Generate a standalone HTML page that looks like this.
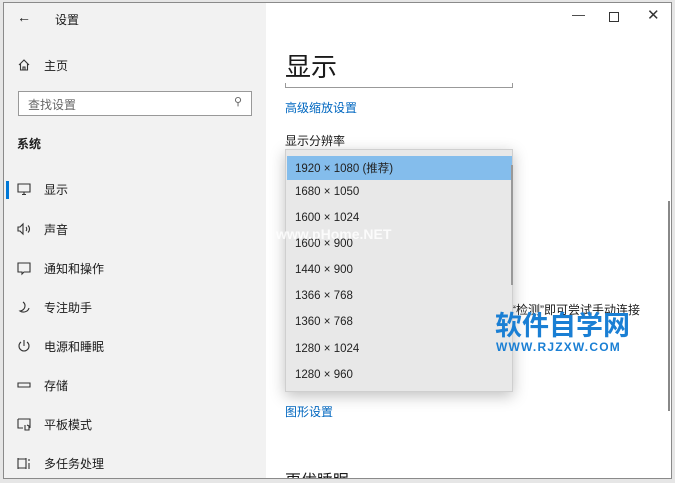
<!DOCTYPE html>
<html><head><meta charset="utf-8"><style>
*{margin:0;padding:0;box-sizing:border-box}
body{width:675px;height:483px;background:#e6e6e6;position:relative;overflow:hidden;font-family:"Liberation Sans","Noto Sans CJK SC",sans-serif;color:#1a1a1a}
.win{position:absolute;left:3px;top:2px;width:669px;height:477px;border:1px solid #8a8a8a;background:#fff;overflow:hidden}
.left{position:absolute;left:0;top:0;width:262px;height:100%;background:#f2f2f2}
.t{position:absolute;white-space:nowrap}
.nav{position:absolute;left:12px;font-size:12px;width:200px;height:18px;white-space:nowrap}
.nav span{position:absolute;left:26px;top:0;white-space:nowrap}
.ic{position:absolute;left:0;top:0;width:16px;height:16px}
.dd{position:absolute;left:281px;top:146px;width:228px;height:243px;background:#e8e8e8;border:1px solid #cfcfcf;box-shadow:0 4px 14px rgba(0,0,0,.25)}
.row{position:absolute;left:9px;font-size:11.5px;color:#222;white-space:nowrap}
</style></head><body>
<div class="win">
<div class="left">
 <div class="t" style="left:13px;top:6px;font-size:14px">←</div>
 <div class="t" style="left:51px;top:8px;font-size:12px">设置</div>
 <div class="nav" style="top:54px"><svg class="ic" viewBox="0 0 16 16" fill="none" stroke="#333" stroke-width="1.1"><path d="M3 8 8 3l5 5M4.5 7v6h7V7M7 13v-3h2v3"/></svg><span style="left:28px">主页</span></div>
 <div style="position:absolute;left:14px;top:88px;width:234px;height:25px;border:1px solid #999;background:#fff"></div>
 <div class="t" style="left:24px;top:93px;font-size:12px;color:#666">查找设置</div>
 <div class="t" style="left:230px;top:92px;font-size:11px;color:#666">⚲</div>
 <div class="t" style="left:13px;top:132px;font-size:12px;font-weight:bold">系统</div>
 <div style="position:absolute;left:2px;top:178px;width:3px;height:18px;background:#0078d7"></div>
 <div class="nav" style="top:178px"><svg class="ic" viewBox="0 0 16 16" fill="none" stroke="#333" stroke-width="1.1"><path d="M2 3h12v8H2zM6 13.5h4M8 11v2"/></svg><span style="left:28px">显示</span></div>
 <div class="nav" style="top:218px"><svg class="ic" viewBox="0 0 16 16" fill="none" stroke="#333" stroke-width="1.1"><path d="M2 6h2l3-3v10l-3-3H2zM10 6c1 1 1 3 0 4M12 4.5c2 2 2 5 0 7"/></svg><span style="left:28px">声音</span></div>
 <div class="nav" style="top:257px"><svg class="ic" viewBox="0 0 16 16" fill="none" stroke="#333" stroke-width="1.1"><path d="M2 3h12v9H8l-2 2v-2H2z"/></svg><span style="left:28px">通知和操作</span></div>
 <div class="nav" style="top:296px"><svg class="ic" viewBox="0 0 16 16" fill="none" stroke="#333" stroke-width="1.1"><path d="M7 3c3 2 3 8-3 9 3 2 8 1 9-3"/></svg><span style="left:28px">专注助手</span></div>
 <div class="nav" style="top:335px"><svg class="ic" viewBox="0 0 16 16" fill="none" stroke="#333" stroke-width="1.1"><path d="M8 2v6M5 4a5 5 0 1 0 6 0"/></svg><span style="left:28px">电源和睡眠</span></div>
 <div class="nav" style="top:374px"><svg class="ic" viewBox="0 0 16 16" fill="none" stroke="#333" stroke-width="1.1"><path d="M2 6h12v4H2z"/></svg><span style="left:28px">存储</span></div>
 <div class="nav" style="top:413px"><svg class="ic" viewBox="0 0 16 16" fill="none" stroke="#333" stroke-width="1.1"><path d="M2 3h12v9M2 3v9h5M9 9v5h4v-4l-2-1"/></svg><span style="left:28px">平板模式</span></div>
 <div class="nav" style="top:452px"><svg class="ic" viewBox="0 0 16 16" fill="none" stroke="#333" stroke-width="1.1"><path d="M2 3v11M10 3v11M2 4h8M2 13h8M13 4v2M13 8v6"/></svg><span style="left:28px">多任务处理</span></div>
</div>
<div class="t" style="left:568px;top:4px;font-size:13px;color:#333">—</div>
<div style="position:absolute;left:605px;top:9px;width:10px;height:10px;border:1px solid #333"></div>
<div class="t" style="left:643px;top:3px;font-size:15px;color:#333">✕</div>
<div class="t" style="left:281px;top:44px;font-size:26px">显示</div>
<div style="position:absolute;left:281px;top:80px;width:228px;height:5px;border:1px solid #999;border-top:none"></div>
<div class="t" style="left:281px;top:96px;font-size:12px;color:#0067c0">高级缩放设置</div>
<div class="t" style="left:281px;top:129px;font-size:12px">显示分辨率</div>
<div class="t" style="left:508px;top:298px;font-size:12px">“检测”即可尝试手动连接</div>
<div class="t" style="left:281px;top:400px;font-size:12px;color:#0067c0">图形设置</div>
<div class="t" style="left:281px;top:464px;font-size:16px">更优睡眠</div>
<div style="position:absolute;left:664px;top:198px;width:2px;height:210px;background:#888"></div>
<div class="dd">
 <div style="position:absolute;left:1px;top:6px;width:225px;height:24px;background:#84bdec"></div>
 <div style="position:absolute;left:225px;top:15px;width:2px;height:120px;background:#999"></div>
 <div class="row" style="top:10px">1920 × 1080 (推荐)</div>
 <div class="row" style="top:36px">1680 × 1050</div>
 <div class="row" style="top:62px">1600 × 1024</div>
 <div class="row" style="top:88px">1600 × 900</div>
 <div class="row" style="top:114px">1440 × 900</div>
 <div class="row" style="top:140px">1366 × 768</div>
 <div class="row" style="top:166px">1360 × 768</div>
 <div class="row" style="top:193px">1280 × 1024</div>
 <div class="row" style="top:219px">1280 × 960</div>
</div>
<div class="t" style="left:491px;top:301px;font-size:27px;font-weight:bold;color:#1a7fd4">软件自学网</div>
<div class="t" style="left:492px;top:337px;font-size:12px;font-weight:bold;color:#1a7fd4;letter-spacing:1.2px">WWW.RJZXW.COM</div>
<div class="t" style="left:272px;top:223px;font-size:14px;font-weight:bold;color:rgba(255,255,255,.8)">www.pHome.NET</div>
</div>
</body></html>
